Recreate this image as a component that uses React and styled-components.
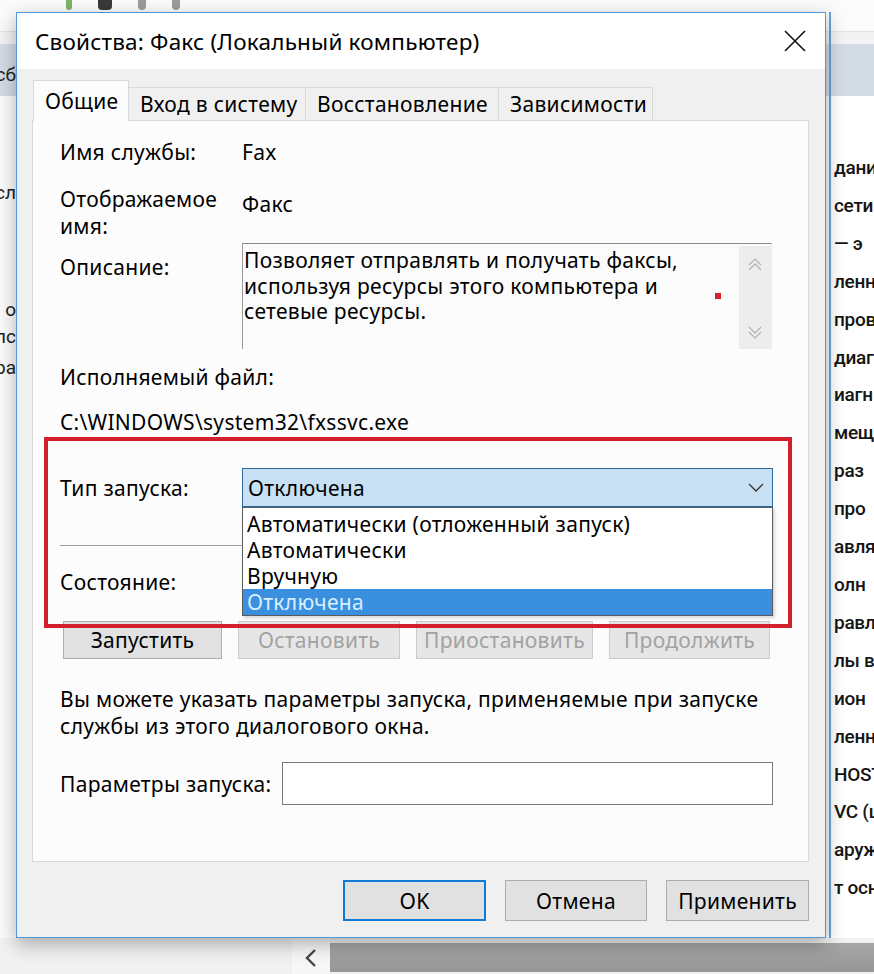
import React from 'react';
import styled, { createGlobalStyle } from 'styled-components';

const GlobalStyle = createGlobalStyle`
  html, body {
    margin: 0;
    padding: 0;
  }
  body {
    width: 874px;
    height: 974px;
    overflow: hidden;
    font-family: 'Noto Sans', Roboto, sans-serif;
    color: #000;
  }
`;

const Page = styled.div`
  display: grid;
  grid-template-columns: 16px 810px 48px;
  grid-template-rows: 12px 926px 36px;
  width: 874px;
  height: 974px;
  background: linear-gradient(
    to bottom,
    #fbfbfb 0 31px,
    #e2e2e2 31px 32px,
    #f3f3f3 32px 44px,
    #d3dbe5 44px 96px,
    #fbfbfb 96px
  );
`;

const TopStrip = styled.div`
  grid-column: 1 / 4;
  grid-row: 1;
  display: flex;
  align-items: flex-start;
  gap: 26px;
  padding-left: 66px;
  overflow: hidden;
`;

const ToolIcon = styled.span`
  display: block;
  width: ${(p) => p.$w}px;
  height: 10px;
  background: ${(p) => p.$color};
  border-radius: 0 0 4px 4px;
`;

const LeftStrip = styled.div`
  grid-column: 1;
  grid-row: 2;
  display: flex;
  flex-direction: column;
  overflow: hidden;
`;

const LeftFrag = styled.div`
  display: flex;
  justify-content: flex-end;
  overflow: hidden;
  white-space: nowrap;
  margin-top: ${(p) => p.$mt}px;
  height: 26px;
  line-height: 26px;
  font-family: Roboto, sans-serif;
  font-size: 19px;
  color: #222;
`;

const RightStrip = styled.div`
  grid-column: 3;
  grid-row: 2;
  display: flex;
  flex-direction: column;
  padding: 137px 0 0 3px;
  margin-left: 3px;
  border-left: 2px solid #6aa6da;
  background: linear-gradient(to bottom, transparent 0 84px, #fff 84px);
  overflow: hidden;
  white-space: nowrap;
  font-family: Roboto, sans-serif;
  font-weight: 500;
  font-size: 19px;
  letter-spacing: -0.3px;
  line-height: 37.9px;
  color: #151515;
`;

const BottomStrip = styled.div`
  grid-column: 1 / 4;
  grid-row: 3;
  display: flex;
  padding-left: 292px;
  background: #f1f1f1;
`;

const ScrollArrow = styled.div`
  width: 38px;
  display: flex;
  align-items: center;
  justify-content: center;
  background: #f7f7f7;
  padding-top: 4px;
`;

const ScrollThumb = styled.div`
  flex: 1;
  margin: 5px 0 2px;
  background: linear-gradient(to bottom, #a6a6a6, #979797);
`;

const Dialog = styled.div`
  grid-column: 2;
  grid-row: 2;
  position: relative;
  z-index: 1;
  display: flex;
  flex-direction: column;
  box-sizing: border-box;
  border: 1px solid #4f97d6;
  background: #f0f0f0;
  box-shadow: 0 6px 18px rgba(0, 0, 0, 0.3);
`;

const TitleBar = styled.div`
  height: 56px;
  display: flex;
  align-items: center;
  justify-content: space-between;
  padding: 0 18px;
  background: #fff;
  font-size: 22.5px;
  letter-spacing: 0.2px;
`;

const Body = styled.div`
  display: flex;
  flex-direction: column;
  padding: 11px 16px 0 15px;
  font-size: 21px;
  letter-spacing: 0.3px;
`;

const Tabs = styled.div`
  display: flex;
  align-items: flex-end;
  height: 41px;
  margin: 0 0 -1px 1px;
  position: relative;
  z-index: 2;
`;

const Tab = styled.div`
  box-sizing: border-box;
  width: ${(p) => p.$w}px;
  height: ${(p) => (p.$active ? 41 : 34)}px;
  margin-left: ${(p) => (p.$first ? 0 : -1)}px;
  padding-left: 11px;
  display: flex;
  align-items: center;
  border: 1px solid #d9d9d9;
  border-bottom: ${(p) => (p.$active ? 'none' : '1px solid #d9d9d9')};
  background: ${(p) => (p.$active ? '#fcfcfc' : '#f0f0f0')};
  white-space: nowrap;
`;

const Panel = styled.div`
  position: relative;
  box-sizing: border-box;
  height: 742px;
  display: flex;
  flex-direction: column;
  padding-left: 27px;
  border: 1px solid #d9d9d9;
  background: #fcfcfc;
  line-height: 26px;
`;

const Row = styled.div`
  display: flex;
  align-items: ${(p) => p.$align || 'flex-start'};
  margin-top: ${(p) => p.$mt}px;
`;

const Label = styled.div`
  flex-shrink: 0;
  width: ${(p) => p.$w || 182}px;
  padding-top: ${(p) => p.$pt || 0}px;
  line-height: ${(p) => p.$lh || 26}px;
  white-space: nowrap;
`;

const Value = styled.div`
  padding-top: ${(p) => p.$pt || 0}px;
  white-space: nowrap;
`;

const DescBox = styled.div`
  position: relative;
  box-sizing: border-box;
  width: 530px;
  height: 106px;
  display: flex;
  border-top: 1px solid #8a8a8a;
  border-left: 1px solid #9a9a9a;
  border-right: 1px solid #ececec;
  background: #fbfbfb;
`;

const DescText = styled.div`
  flex: 1;
  padding: 4px 0 0 1px;
  line-height: 25.5px;
  white-space: nowrap;
`;

const ScrollBar = styled.div`
  width: 32px;
  margin-top: 2px;
  display: flex;
  flex-direction: column;
  justify-content: space-between;
  align-items: center;
  padding: 12px 0 10px;
  background: #ededed;
`;

const Marker = styled.span`
  position: absolute;
  left: 472px;
  top: 49px;
  width: 6px;
  height: 6px;
  background: #d6222f;
`;

const ComboWrap = styled.div`
  position: relative;
  width: 531px;
  height: 39px;
`;

const Combo = styled.div`
  box-sizing: border-box;
  height: 100%;
  display: flex;
  align-items: center;
  justify-content: space-between;
  padding: 0 8px 0 5px;
  border: 1px solid #2e6a9e;
  background: #c8e0f4;
`;

const DropList = styled.div`
  position: absolute;
  top: 100%;
  left: 0;
  z-index: 3;
  box-sizing: border-box;
  width: 531px;
  padding-top: 3px;
  border: 1px solid #5c5c5c;
  background: #fff;
  box-shadow: 2px 2px 3px rgba(0, 0, 0, 0.15);
`;

const Option = styled.div`
  height: 26px;
  line-height: 26px;
  padding-left: 4px;
  white-space: nowrap;
  background: ${(p) => (p.$selected ? '#3a8fdf' : 'transparent')};
  color: ${(p) => (p.$selected ? '#d8efff' : '#000')};
`;

const Separator = styled.div`
  margin-top: 38px;
  width: 712px;
  height: 1px;
  background: #a0a0a0;
`;

const ButtonRow = styled.div`
  display: flex;
  gap: 16px;
  margin: 26px 0 0 3px;
`;

const ServiceButton = styled.div`
  box-sizing: border-box;
  width: ${(p) => p.$w}px;
  height: 38px;
  display: flex;
  align-items: center;
  justify-content: center;
  border: 1px solid ${(p) => (p.$disabled ? '#cbcbcb' : '#adadad')};
  background: ${(p) => (p.$disabled ? '#e6e6e6' : '#e1e1e1')};
  color: ${(p) => (p.$disabled ? '#a2a2a2' : '#000')};
`;

const Info = styled.div`
  margin-top: 27px;
  line-height: 27px;
  white-space: nowrap;
`;

const ParamInput = styled.div`
  box-sizing: border-box;
  width: 491px;
  height: 43px;
  border: 1px solid #7a7a7a;
  background: #fff;
`;

const Highlight = styled.div`
  position: absolute;
  left: 11px;
  top: 316px;
  z-index: 4;
  box-sizing: border-box;
  width: 748px;
  height: 191px;
  border: 4px solid #d21f2b;
  pointer-events: none;
`;

const Footer = styled.div`
  display: flex;
  justify-content: flex-end;
  gap: 19px;
  margin-top: 18px;
`;

const DialogButton = styled.div`
  box-sizing: border-box;
  width: ${(p) => p.$w}px;
  height: 41px;
  display: flex;
  align-items: center;
  justify-content: center;
  border: ${(p) => (p.$primary ? '2px solid #0f7bd4' : '1px solid #adadad')};
  background: #e1e1e1;
`;

const CloseIcon = () => (
  <svg width="24" height="24" viewBox="0 0 24 24">
    <path d="M2 2 L22 22 M22 2 L2 22" stroke="#111" strokeWidth="1.6" fill="none" />
  </svg>
);

const Chevron = ({ up, color = '#a9a9a9', w = 16, h = 10 }) => (
  <svg width={w} height={h} viewBox="0 0 16 10">
    <path
      d={up ? 'M1 9 L8 2 L15 9' : 'M1 1 L8 8 L15 1'}
      stroke={color}
      strokeWidth="1.3"
      fill="none"
    />
  </svg>
);

const DoubleChevron = ({ up }) => (
  <svg width="16" height="14" viewBox="0 0 16 14">
    <path
      d={up ? 'M2 7 L8 1 L14 7 M2 12 L8 6 L14 12' : 'M2 2 L8 8 L14 2 M2 7 L8 13 L14 7'}
      stroke="#b0b0b0"
      strokeWidth="1.1"
      fill="none"
    />
  </svg>
);

const rightLines = [
  'дани', 'сети', '— э', 'ленн', 'пров', 'диаг', 'иагн', 'мещ', ' раз', ' про',
  'авля', 'олн', 'равл', 'лы в', 'ион', 'ленн', 'HOST', 'VC (ц', 'аруж', 'т осн',
];

const options = ['Автоматически (отложенный запуск)', 'Автоматически', 'Вручную', 'Отключена'];

const App = () => (
  <Page>
    <GlobalStyle />
    <TopStrip>
      <ToolIcon $w={6} $color="#7fb46a" />
      <ToolIcon $w={14} $color="#3a3a3a" />
      <ToolIcon $w={8} $color="#9a9a9a" />
      <ToolIcon $w={8} $color="#9a9a9a" />
    </TopStrip>

    <LeftStrip>
      <LeftFrag $mt={50}>сб</LeftFrag>
      <LeftFrag $mt={92}>сл</LeftFrag>
      <LeftFrag $mt={91}>о</LeftFrag>
      <LeftFrag $mt={1}>пс</LeftFrag>
      <LeftFrag $mt={5}>ра</LeftFrag>
    </LeftStrip>

    <Dialog>
      <TitleBar>
        <span>Свойства: Факс (Локальный компьютер)</span>
        <CloseIcon />
      </TitleBar>
      <Body>
        <Tabs>
          <Tab $w={96} $active $first>Общие</Tab>
          <Tab $w={178}>Вход в систему</Tab>
          <Tab $w={194}>Восстановление</Tab>
          <Tab $w={155}>Зависимости</Tab>
        </Tabs>
        <Panel>
          <Row $mt={18}>
            <Label>Имя службы:</Label>
            <Value>Fax</Value>
          </Row>
          <Row $mt={21}>
            <Label $lh={27}>
              Отображаемое
              <br />
              имя:
            </Label>
            <Value $pt={5}>Факс</Value>
          </Row>
          <Row $mt={3}>
            <Label $pt={11}>Описание:</Label>
            <DescBox>
              <DescText>
                Позволяет отправлять и получать факсы,
                <br />
                используя ресурсы этого компьютера и
                <br />
                сетевые ресурсы.
              </DescText>
              <ScrollBar>
                <DoubleChevron up />
                <DoubleChevron />
              </ScrollBar>
              <Marker />
            </DescBox>
          </Row>
          <Row $mt={15}>
            <Label $w={400}>Исполняемый файл:</Label>
          </Row>
          <Row $mt={19}>
            <Value>C:\WINDOWS\system32\fxssvc.exe</Value>
          </Row>
          <Row $mt={33} $align="center">
            <Label>Тип запуска:</Label>
            <ComboWrap>
              <Combo>
                <span>Отключена</span>
                <Chevron color="#333" />
              </Combo>
              <DropList>
                {options.map((o, i) => (
                  <Option key={o} $selected={i === options.length - 1}>{o}</Option>
                ))}
              </DropList>
            </ComboWrap>
          </Row>
          <Separator />
          <Row $mt={23}>
            <Label>Состояние:</Label>
          </Row>
          <ButtonRow>
            <ServiceButton $w={159}>Запустить</ServiceButton>
            <ServiceButton $w={162} $disabled>Остановить</ServiceButton>
            <ServiceButton $w={177} $disabled>Приостановить</ServiceButton>
            <ServiceButton $w={161} $disabled>Продолжить</ServiceButton>
          </ButtonRow>
          <Info>
            Вы можете указать параметры запуска, применяемые при запуске
            <br />
            службы из этого диалогового окна.
          </Info>
          <Row $mt={22} $align="center">
            <Label $w={222}>Параметры запуска:</Label>
            <ParamInput />
          </Row>
          <Highlight />
        </Panel>
        <Footer>
          <DialogButton $w={143} $primary>OK</DialogButton>
          <DialogButton $w={142}>Отмена</DialogButton>
          <DialogButton $w={143}>Применить</DialogButton>
        </Footer>
      </Body>
    </Dialog>

    <RightStrip>
      {rightLines.map((t, i) => (
        <div key={i}>{t}</div>
      ))}
    </RightStrip>

    <BottomStrip>
      <ScrollArrow>
        <svg width="12" height="18" viewBox="0 0 12 18">
          <path d="M10 1 L2 9 L10 17" stroke="#444" strokeWidth="2.4" fill="none" />
        </svg>
      </ScrollArrow>
      <ScrollThumb />
    </BottomStrip>
  </Page>
);

export default App;
